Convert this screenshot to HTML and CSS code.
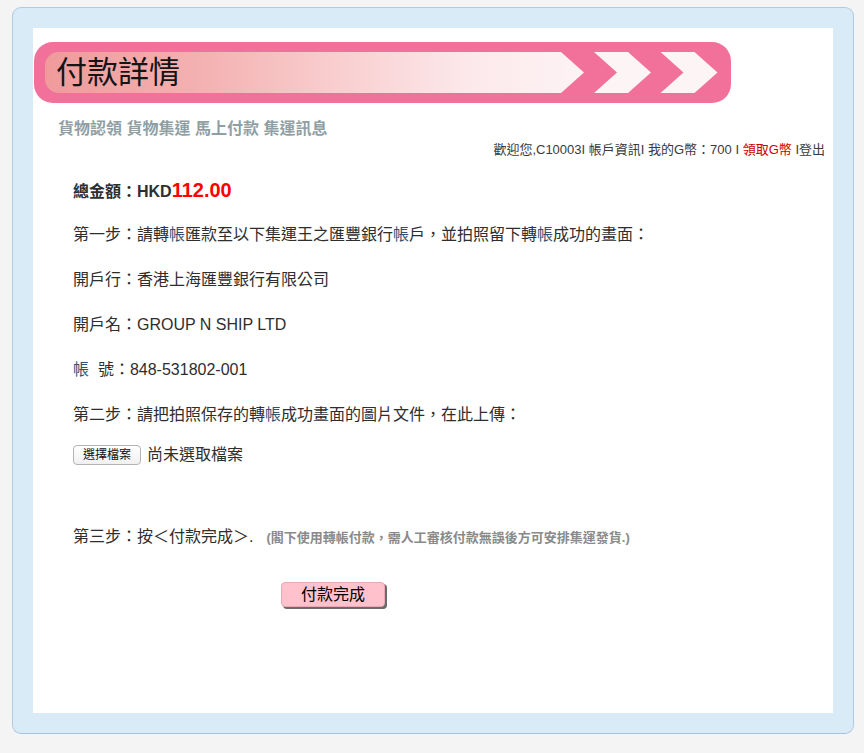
FILE: index.html
```html
<!DOCTYPE html>
<html lang="zh-Hant">
<head>
<meta charset="utf-8">
<title>付款詳情</title>
<link rel="stylesheet" href="styles.css">
</head>
<body>
<div class="frame">
  <div class="panel">
    <div class="banner">
      <svg class="banner-bg" width="697" height="61" viewBox="0 0 697 61" aria-hidden="true">
        <defs>
          <linearGradient id="g" x1="0" y1="0" x2="1" y2="0">
            <stop offset="0" stop-color="#f09a9b"/>
            <stop offset="0.3" stop-color="#f4b2b2"/>
            <stop offset="0.55" stop-color="#f9cfd0"/>
            <stop offset="0.78" stop-color="#fce8ea"/>
            <stop offset="1" stop-color="#fdf3f5"/>
          </linearGradient>
        </defs>
        <rect x="0" y="0" width="697" height="61" rx="19" fill="#f2719b"/>
        <path d="M25 10 H527 L550 30.5 L527 51 H25 A14 14 0 0 1 11 37 V24 A14 14 0 0 1 25 10 Z" fill="url(#g)"/>
        <path d="M560 10 H594 L617 30.5 L594 51 H560 L583 30.5 Z" fill="#fdf4f6"/>
        <path d="M626.5 10 H660.5 L683.5 30.5 L660.5 51 H626.5 L649.5 30.5 Z" fill="#fdf4f6"/>
      </svg>
      <h1 class="title">付款詳情</h1>
    </div>
    <nav class="nav"><a href="#">貨物認領</a> <a href="#">貨物集運</a> <a href="#">馬上付款</a> <a href="#">集運訊息</a></nav>
    <div class="userbar">歡迎您,C10003I 帳戶資訊I 我的G幣：700 I <a href="#" class="red">領取G幣</a> I登出</div>
    <div class="content">
      <div class="row total">總金額：HKD<span class="amount">112.00</span></div>
      <div class="row">第一步：請轉<span class="tint">帳</span>匯款至以下集運王之匯豐銀行<span class="tint">帳</span>戶，並拍照留下轉<span class="tint">帳</span>成功的畫面：</div>
      <div class="row">開戶行：香港上海匯豐銀行有限公司</div>
      <div class="row">開戶名：GROUP N SHIP LTD</div>
      <div class="row"><span class="tint">帳</span>&nbsp;&nbsp;號：848-531802-001</div>
      <div class="row">第二步：請把拍照保存的轉<span class="tint">帳</span>成功畫面的圖片文件，在此上傳：</div>
      <div class="row upload"><button class="file-btn" type="button">選擇檔案</button><span class="file-name">尚未選取檔案</span></div>
      <div class="row step3">第三步：按＜付款完成＞.<span class="note">(閣下使用轉帳付款，需人工審核付款無誤後方可安排集運發貨.)</span></div>
      <div class="actions"><button class="submit" type="button">付款完成</button></div>
    </div>
  </div>
</div>
</body>
</html>
```
FILE: styles.css
```css
html, body {
  margin: 0;
  padding: 0;
  background: #f4f4f4;
}
body {
  padding: 7px 0 0 12px;
  font-family: "Liberation Sans", "Noto Sans CJK TC", sans-serif;
  color: #333;
}
.frame {
  width: 800px;
  height: 685px;
  padding: 20px;
  background: #d8ebf6;
  border: 1px solid #aecbe3;
  border-bottom-color: #a6c3de;
  border-radius: 9px;
}
.panel {
  width: 800px;
  height: 685px;
  background: #fff;
  display: flex;
  flex-direction: column;
}
.banner {
  position: relative;
  width: 697px;
  height: 61px;
  margin: 14px 0 0 1px;
  display: flex;
  align-items: center;
}
.banner-bg {
  position: absolute;
  left: 0;
  top: 0;
  display: block;
}
.title {
  position: relative;
  margin: 0 0 0 22px;
  font-size: 31px;
  font-weight: normal;
  color: #151515;
  line-height: 40px;
}
.nav {
  margin: 14px 0 0 25px;
  height: 24px;
  line-height: 24px;
  font-size: 16px;
  font-weight: bold;
  color: #909fa4;
}
.nav a {
  color: #909fa4;
  text-decoration: none;
}
.userbar {
  align-self: flex-end;
  margin-right: 8px;
  height: 18px;
  line-height: 18px;
  font-size: 13px;
  color: #3a3a3a;
}
.userbar .red {
  color: #cc0000;
  text-decoration: none;
}
.content {
  display: flex;
  flex-direction: column;
  gap: 21px;
  margin-top: 19px;
  padding-left: 40px;
  font-size: 16px;
  color: #2e2e2e;
}
.row {
  height: 24px;
  line-height: 24px;
  white-space: nowrap;
}
.total {
  font-weight: bold;
}
.amount {
  color: #ff0000;
  font-size: 20px;
}
.tint {
  color: #33506f;
}
.upload {
  margin-top: -5px;
  display: flex;
  align-items: center;
}
.file-btn {
  height: 20px;
  width: 68px;
  padding: 0;
  font-family: "Liberation Sans", "Noto Sans CJK TC", sans-serif;
  font-size: 12px;
  line-height: 18px;
  color: #111;
  background: linear-gradient(#ffffff, #f0f0f0);
  border: 1px solid #b4b4b4;
  border-radius: 4px;
}
.file-name {
  margin-left: 6px;
}
.step3 {
  margin-top: 37px;
}
.note {
  margin-left: 13px;
  font-size: 13px;
  font-weight: bold;
  color: #8a8a8a;
}
.actions {
  margin-top: 12px;
  padding-left: 208px;
}
.submit {
  width: 104px;
  height: 25px;
  padding: 0;
  font-family: "Liberation Sans", "Noto Sans CJK TC", sans-serif;
  font-size: 16px;
  line-height: 22px;
  color: #000;
  background: #ffc2cd;
  border: 1px solid #e8a8b4;
  border-radius: 4px;
  box-shadow: 2px 2px 0 #6a6a6a;
}
```
